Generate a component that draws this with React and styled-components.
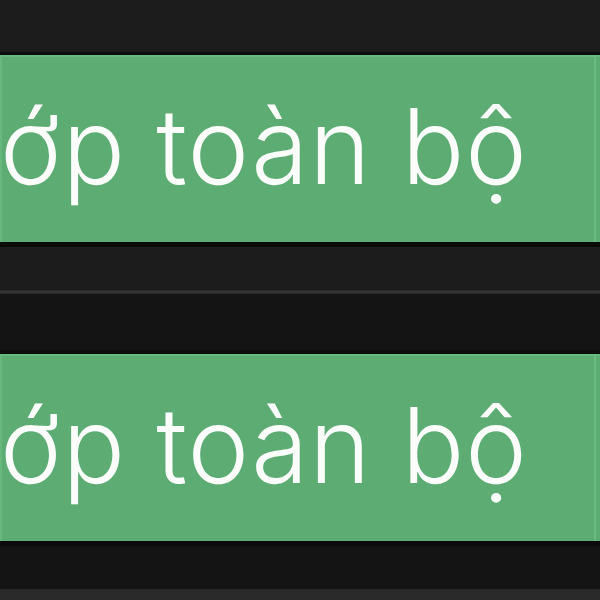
import React from "react";
import styled, { createGlobalStyle } from "styled-components";

const GlobalStyle = createGlobalStyle`
  html, body {
    margin: 0;
    padding: 0;
    background: #141414;
  }
  body {
    font-family: Inter, "Noto Sans", sans-serif;
    overflow: hidden;
  }
`;

const Page = styled.div`
  width: 600px;
  height: 600px;
  overflow: hidden;
  display: flex;
  flex-direction: column;
`;

const Group = styled.div`
  background: ${({ $bg }) => $bg};
  padding-top: ${({ $top }) => $top}px;
  padding-bottom: ${({ $bottom }) => $bottom}px;
`;

const Divider = styled.div`
  height: 4px;
  background: linear-gradient(#242424, #383838 50%, #242424);
`;

const Item = styled.div`
  border-top: ${({ $topBorder }) => $topBorder}px solid #0d0d0d;
  border-bottom: 5px solid #0b0b0b;
`;

const Label = styled.div`
  height: 187px;
  box-sizing: border-box;
  background: #5cac73;
  box-shadow: inset 0 2px 0 #68bb7f, inset 2px 0 0 #66b87d,
    inset -4px 0 0 #5cac73, inset -6px 0 0 #6abd81;
  color: #fbfdfb;
  font-size: 104px;
  font-weight: 300;
  line-height: 1;
  padding-top: 39px;
  white-space: nowrap;
  overflow: hidden;
  letter-spacing: 1px;
`;

const Footer = styled.div`
  flex: 1;
  background: #2a2a2a;
`;

const items = ["ớp toàn bộ", "ớp toàn bộ"];

const App = () => {
  return (
    <Page>
      <GlobalStyle />
      <Group $bg="#1c1c1c" $top={52} $bottom={43}>
        <Item $topBorder={3}>
          <Label>{items[0]}</Label>
        </Item>
      </Group>
      <Divider />
      <Group $bg="#141414" $top={56} $bottom={43}>
        <Item $topBorder={4}>
          <Label>{items[1]}</Label>
        </Item>
      </Group>
      <Footer />
    </Page>
  );
};

export default App;
